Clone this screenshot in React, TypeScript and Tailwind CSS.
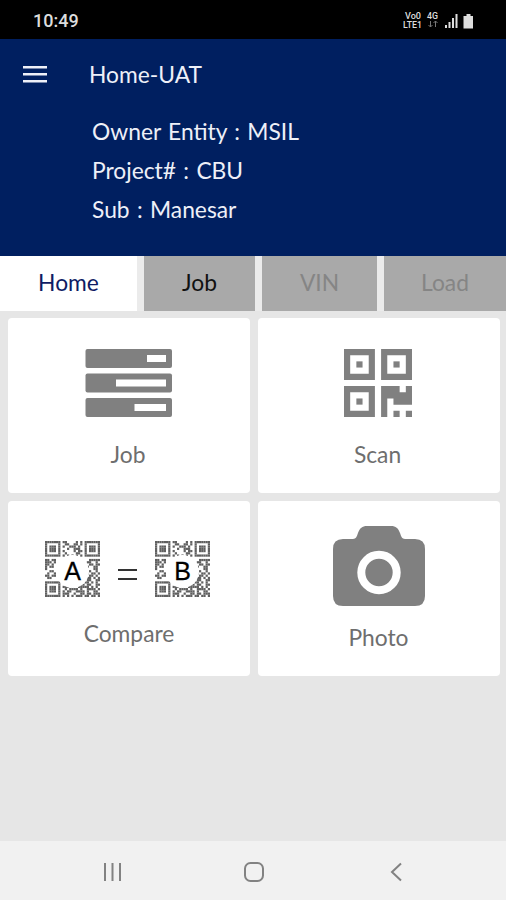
import React from 'react';

interface CardProps {
  label: string;
  labelClass: string;
  children: React.ReactNode;
}

// 25x25 modules, '#' is a dark one
const QR_ROWS = [
  '#######.##....#.#.#######',
  '#.....#..##..##.#.#.....#',
  '#.###.#.#..###.#..#.###.#',
  '#.###.#...#..###..#.###.#',
  '#.###.#.#....#.##.#.###.#',
  '#.....#..#....##..#.....#',
  '#######.#.#.#.#.#.#######',
  '.........................',
  '##.##...............#####',
  '###.#..............##..#.',
  '##.#................##.##',
  '#.##...............#..##.',
  '#.....................##.',
  '..##................#..#.',
  '.#..#..............#.##.#',
  '##.##...............##.#.',
  '.##................##.#.#',
  '...................##..##',
  '#######...........##.#.#.',
  '#.....#.......#.##.##..##',
  '#.###.#.###.#..#####.#.#.',
  '#.###.#..#.####.#..####.#',
  '#.###.#.#.##..####.#..##.',
  '#.....#.###..#..##.##.###',
  '#######.#.#.#.###.##.##.#',
];

const QrBadge: React.FC<{ letter: string }> = ({ letter }) => (
  <div className="relative flex h-14 w-[55px] items-center justify-center">
    <svg viewBox="0 0 25 25" preserveAspectRatio="none" className="absolute inset-0 h-full w-full" fill="#606060">
      {QR_ROWS.map((row, y) =>
        row.split('').map((cell, x) =>
          cell === '#' ? <rect key={`${x}-${y}`} x={x} y={y} width="1" height="1" /> : null
        )
      )}
    </svg>
    <span className="relative mt-1 flex h-[33px] w-[33px] items-center justify-center rounded-full bg-white font-['Liberation_Sans',sans-serif] text-[25px] text-black [-webkit-text-stroke:0.3px_black]">
      {letter}
    </span>
  </div>
);

const JobIcon = () => (
  <svg width="88" height="70" viewBox="0 0 88 70" fill="#808080">
    <rect x="0.5" y="1" width="86.5" height="19" rx="2" />
    <rect x="0.5" y="25.5" width="86.5" height="19" rx="2" />
    <rect x="0.5" y="50" width="86.5" height="19" rx="2" />
    <g fill="#fff">
      <rect x="62" y="7" width="19" height="7" />
      <rect x="31" y="31.5" width="50" height="7" />
      <rect x="49.5" y="56" width="31.5" height="7" />
    </g>
  </svg>
);

const ScanIcon = () => (
  <svg width="68" height="68" viewBox="0 0 11 11" fill="#808080">
    {[[0, 0], [6, 0], [0, 6]].map(([x, y]) => (
      <g key={`${x}-${y}`}>
        <path fillRule="evenodd" d={`M${x} ${y}h5v5h-5zM${x + 1} ${y + 1}v3h3v-3z`} />
        <rect x={x + 2} y={y + 2} width="1" height="1" />
      </g>
    ))}
    <path d="M6 6h3v1h1v-1h1v3h-3v-1h-1v3h-1zM8 10h1v1h-1zM10 10h1v1h-1z" />
  </svg>
);

const PhotoIcon = () => (
  <svg width="92" height="80" viewBox="0 0 92 80">
    <path
      fill="#808080"
      d="M10 13H20C23 13 24 10 25 7C27 2 29 0 34 0H58C63 0 65 2 67 7C68 10 69 13 72 13H82Q92 13 92 23V70Q92 80 82 80H10Q0 80 0 70V23Q0 13 10 13Z"
    />
    <circle cx="46" cy="46.5" r="17.7" fill="none" stroke="#fff" strokeWidth="8" />
  </svg>
);

const Card: React.FC<CardProps> = ({ label, labelClass, children }) => (
  <button className="flex flex-col items-center rounded bg-white text-[22.8px] leading-7 text-[#6e6e6e]">
    {children}
    <span className={labelClass}>{label}</span>
  </button>
);

const StatusBar = () => (
  <div className="flex h-[39px] items-center justify-between bg-black pr-[31px] pl-[33px] text-[#ddd]">
    <span className="mt-0.5 font-[Roboto,sans-serif] text-[18px] font-medium">10:49</span>
    <svg width="72" height="18" viewBox="0 0 72 18" fill="currentColor" className="font-[Roboto,sans-serif] font-medium">
      <text x="2" y="8" fontSize="9" textLength="16" lengthAdjust="spacingAndGlyphs">Vo0</text>
      <text x="0" y="17" fontSize="9" textLength="19" lengthAdjust="spacingAndGlyphs">LTE1</text>
      <text x="24" y="8" fontSize="9" textLength="11" lengthAdjust="spacingAndGlyphs">4G</text>
      <path d="M27.5 10v6M25.5 14l2 2 2-2M32.5 16v-6M30.5 12l2-2 2 2" fill="none" stroke="#777" />
      <path d="M42 14h2v3h-2zM45.500 11h2v6h-2zM49 7h2v10h-2zM52.500 3h2v14h-2z" />
      <path d="M63.500 3h4v2h2.500v12.500h-9.500v-12.500h3z" />
    </svg>
  </div>
);

const Header = () => (
  <header className="h-[217px] bg-[#001f60] text-[22.8px] text-[#eef0f8]">
    <div className="flex h-[71px] items-center pl-[23px]">
      <svg width="24" height="17" viewBox="0 0 24 17" fill="currentColor">
        <path d="M0 0h24v2.500H0zM0 7h24v2.500H0zM0 14h24v2.500H0z" />
      </svg>
      <h1 className="ml-[42px]">Home-UAT</h1>
    </div>
    <div className="pt-0.5 pl-[92px] leading-[39px] [word-spacing:1.5px]">
      <p>Owner Entity : MSIL</p>
      <p>Project# : CBU</p>
      <p>Sub : Manesar</p>
    </div>
  </header>
);

const App: React.FC = () => {
  return (
    <div className="flex h-[900px] w-[506px] flex-col overflow-hidden bg-[#e6e6e6] font-[Lato,sans-serif]">
      <StatusBar />
      <Header />
      <nav className="grid h-[55px] grid-cols-[137px_111px_115px_122px] gap-[7px] bg-[#ebebeb] text-[22.8px] *:pb-0.5">
        <button className="bg-white text-[#0f1c64]">Home</button>
        <button className="bg-[#a9a9a9] text-[#111]">Job</button>
        <button className="bg-[#a9a9a9] text-[#858585]">VIN</button>
        <button className="bg-[#a9a9a9] text-[#858585]">Load</button>
      </nav>
      <main className="grid flex-1 grid-cols-[242px_242px] grid-rows-[175px_175px] gap-2 pt-[7px] pl-2">
        <Card label="Job" labelClass="mt-[22px] pr-0.5">
          <div className="pt-[30px]"><JobIcon /></div>
        </Card>
        <Card label="Scan" labelClass="mt-[23px] pr-[3px]">
          <div className="pt-[31px] pr-0.5"><ScanIcon /></div>
        </Card>
        <Card label="Compare" labelClass="mt-[22px]">
          <div className="flex items-center pt-10 pr-[3px]">
            <QrBadge letter="A" />
            <div className="mx-[18px] mt-2.5 h-[11px] w-[19px] border-y-2 border-[#333]" />
            <QrBadge letter="B" />
          </div>
        </Card>
        <Card label="Photo" labelClass="mt-[17px] pr-px">
          <div className="pt-[25px]"><PhotoIcon /></div>
        </Card>
      </main>
      <footer className="flex h-[59px] items-center bg-[#f1f1f1] pt-0.5 pl-[103px]">
        <svg width="300" height="24" viewBox="0 0 300 24" fill="none" stroke="#828282" strokeWidth="2">
          <path d="M2 3v18M9.500 3v18M17 3v18" />
          <rect x="142" y="3" width="18" height="18" rx="5.500" />
          <path d="M298 3.500l-9 8.500 9 8.500" />
        </svg>
      </footer>
    </div>
  );
};

export default App;
